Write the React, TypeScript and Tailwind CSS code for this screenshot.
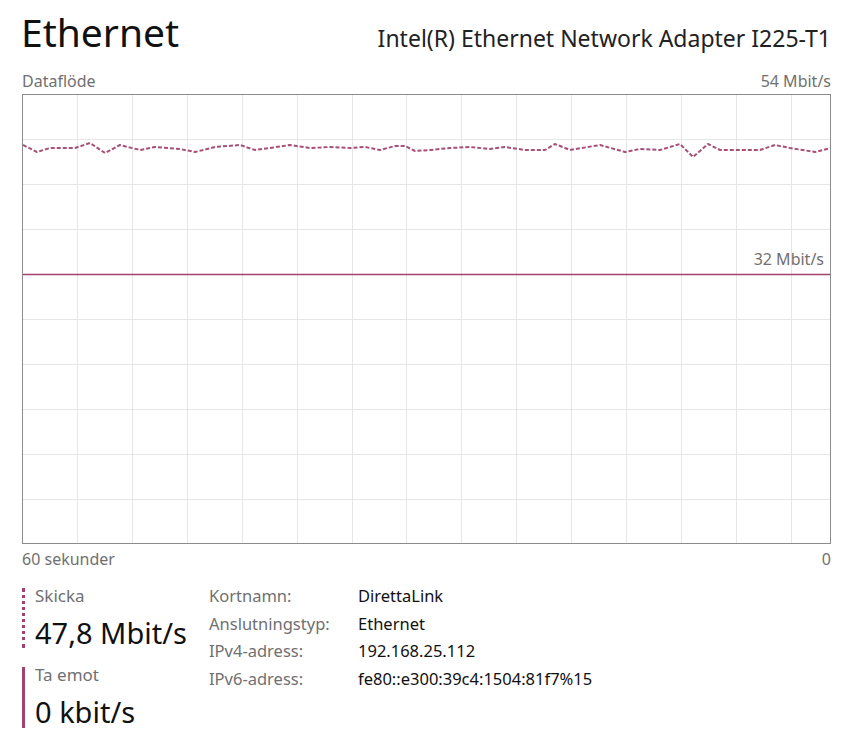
const FONT = { fontFamily: '"Segoe UI", "Noto Sans", "Open Sans", sans-serif' };

// grid geometry, relative to the inner area of the graph box
const W = 807;
const H = 448;
const hLines = [44, 89, 134, 179, 224, 269, 314, 359, 404];
const vLines = Array.from({ length: 14 }, (_, i) => 54 + i * 54.9);

// sampled send curve (absolute screenshot coords)
const sendPts: [number, number][] = [
  [23, 145], [37, 152], [50, 148], [75, 148], [90, 143], [105, 153], [120, 145],
  [140, 150], [155, 147], [180, 149], [195, 152], [215, 147], [240, 145], [255, 150],
  [270, 148], [290, 145], [310, 148], [330, 147], [350, 148], [365, 147], [380, 150],
  [395, 146], [405, 146], [415, 151], [430, 150], [450, 148], [470, 147], [490, 149],
  [505, 147], [525, 150], [545, 150], [555, 144], [570, 150], [600, 145], [625, 152],
  [640, 149], [660, 150], [680, 144], [693, 157], [708, 144], [720, 150], [745, 150],
  [760, 150], [775, 145], [790, 148], [815, 152], [831, 148],
];

const details = [
  ['Kortnamn:', 'DirettaLink'],
  ['Anslutningstyp:', 'Ethernet'],
  ['IPv4-adress:', '192.168.25.112'],
  ['IPv6-adress:', 'fe80::e300:39c4:1504:81f7%15'],
];

export default function App() {
  const points = sendPts.map(([x, y]) => `${x - 23},${y - 95}`).join(' ');

  return (
    <div className="w-[864px] h-[750px] bg-white overflow-hidden" style={FONT}>
      <div className="ml-[22px] w-[809px]">
        {/* header */}
        <div className="flex items-baseline justify-between h-[64px] pt-[8px]">
          <h1 className="text-[39px] leading-[48px] font-normal text-[#111] -ml-[1px]">Ethernet</h1>
          <span className="text-[23px] text-[#222]">Intel(R) Ethernet Network Adapter I225-T1</span>
        </div>

        <div className="flex justify-between text-[16px] leading-[22px] text-[#707070] mt-[6px] mb-[2px]">
          <span>Dataflöde</span>
          <span>54 Mbit/s</span>
        </div>

        {/* graph */}
        <div className="relative h-[450px] border border-[#8c8c8c]">
          <svg width={W} height={H} className="block">
            {hLines.map((y) => (
              <line key={`h${y}`} x1={0} x2={W} y1={y + 0.5} y2={y + 0.5} stroke="#e6e6e6" strokeWidth={1} />
            ))}
            {vLines.map((x) => (
              <line key={`v${x}`} y1={0} y2={H} x1={Math.round(x) + 0.5} x2={Math.round(x) + 0.5} stroke="#e6e6e6" strokeWidth={1} />
            ))}
            <line x1={0} x2={W} y1={179.5} y2={179.5} stroke="#a3426c" strokeWidth={1.6} />
            <polyline
              points={points}
              fill="none"
              stroke="#a84f78"
              strokeWidth={2}
              strokeDasharray="4 2"
              strokeLinejoin="round"
            />
          </svg>
          <span className="absolute right-[6px] top-[154px] text-[16px] leading-[20px] text-[#707070]">32 Mbit/s</span>
        </div>

        <div className="flex justify-between text-[16px] leading-[22px] text-[#707070] mt-[4px]">
          <span>60 sekunder</span>
          <span>0</span>
        </div>

        {/* stats */}
        <div className="flex mt-[18px]">
          <div className="w-[187px] flex flex-col gap-[19px]">
            <div className="border-l-[3px] border-dotted border-[#a3426c] pl-[10px] h-[60px]">
              <div className="text-[17px] leading-[16px] text-[#707070]">Skicka</div>
              <div className="text-[29px] leading-[40px] text-[#111] mt-[9px]">47,8 Mbit/s</div>
            </div>
            <div className="border-l-[3px] border-[#a3426c] pl-[10px] h-[61px]">
              <div className="text-[17px] leading-[16px] text-[#707070]">Ta emot</div>
              <div className="text-[29px] leading-[40px] text-[#111] mt-[9px]">0 kbit/s</div>
            </div>
          </div>
          <div className="grid grid-cols-[149px_auto] auto-rows-[27.7px] text-[16.5px] leading-[20px] -mt-[2px]">
            {details.map(([k, v]) => (
              <div key={k} className="contents">
                <span className="text-[#707070]">{k}</span>
                <span className="text-[#111]">{v}</span>
              </div>
            ))}
          </div>
        </div>
      </div>
    </div>
  );
}
